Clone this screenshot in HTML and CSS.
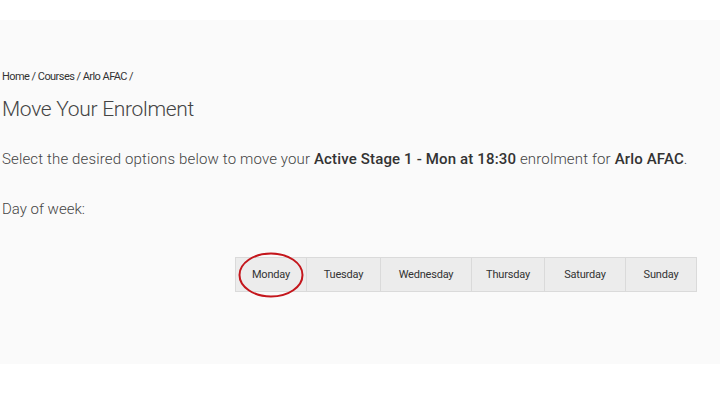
FILE: index.html
```html
<!DOCTYPE html>
<html>
<head>
  <title>Move Your Enrolment</title>
  <meta charset="utf-8">
  <link rel="stylesheet" href="styles.css">
</head>
<body>
  <div class="page">
    <!-- Breadcrumb -->
    <div class="breadcrumb">
      <a href="#">Home</a> / <a href="#">Courses</a> / <a href="#">Arlo AFAC</a> /
    </div>

    <h1 class="page-title">Move Your Enrolment</h1>

    <p class="intro">
      Select the desired options below to move your <strong>Active Stage 1 - Mon at 18:30</strong>
      enrolment for <strong>Arlo AFAC</strong>.
    </p>

    <div class="field-label">Day of week:</div>

    <!-- Day picker -->
    <div class="day-picker">
      <button class="day-btn day-mon">
        Monday
        <svg class="circle-mark" viewBox="0 0 66 46" width="66" height="46">
          <ellipse cx="33" cy="23" rx="31.5" ry="21.5" fill="none" stroke="#c4161c" stroke-width="2"/>
        </svg>
      </button>
      <button class="day-btn day-tue">Tuesday</button>
      <button class="day-btn day-wed">Wednesday</button>
      <button class="day-btn day-thu">Thursday</button>
      <button class="day-btn day-sat">Saturday</button>
      <button class="day-btn day-sun">Sunday</button>
    </div>
  </div>
</body>
</html>
```

FILE: styles.css
```css
body {
  margin: 0;
  background: #ffffff;
  width: 720px;
  height: 405px;
  overflow: hidden;
  font-family: Roboto, 'Liberation Sans', sans-serif;
  color: #444;
}

.page {
  margin-top: 20px;
  height: 344px;
  box-sizing: border-box;
  background: #fafafa;
  padding: 50px 23px 0 2px;
}

.breadcrumb {
  font-size: 11px;
  line-height: 14px;
  color: #333;
  letter-spacing: -0.55px;
}

.breadcrumb a {
  color: #333;
  text-decoration: none;
}

.page-title {
  margin: 11px 0 0;
  font-size: 21px;
  line-height: 28px;
  font-weight: 300;
  color: #444;
  letter-spacing: -0.3px;
}

.intro {
  margin: 26px 0 0;
  font-size: 15px;
  line-height: 20px;
  font-weight: 300;
  color: #444;
  letter-spacing: 0.15px;
}

.intro strong {
  font-weight: 500;
  color: #333;
}

.field-label {
  margin-top: 30px;
  font-size: 15px;
  line-height: 20px;
  font-weight: 300;
  color: #444;
}

.day-picker {
  margin-top: 38px;
  display: flex;
  justify-content: flex-end;
}

.day-btn {
  position: relative;
  height: 35px;
  padding: 0;
  background: #ececec;
  border: 1px solid #dadada;
  margin-left: -1px;
  font-family: Roboto, 'Liberation Sans', sans-serif;
  font-size: 11px;
  color: #333;
  letter-spacing: -0.2px;
}

.day-mon { width: 72px; }
.day-tue { width: 75px; }
.day-wed { width: 92px; }
.day-thu { width: 74px; }
.day-sat { width: 82px; }
.day-sun { width: 72px; }

.circle-mark {
  position: absolute;
  left: 2px;
  top: -6px;
}
```
